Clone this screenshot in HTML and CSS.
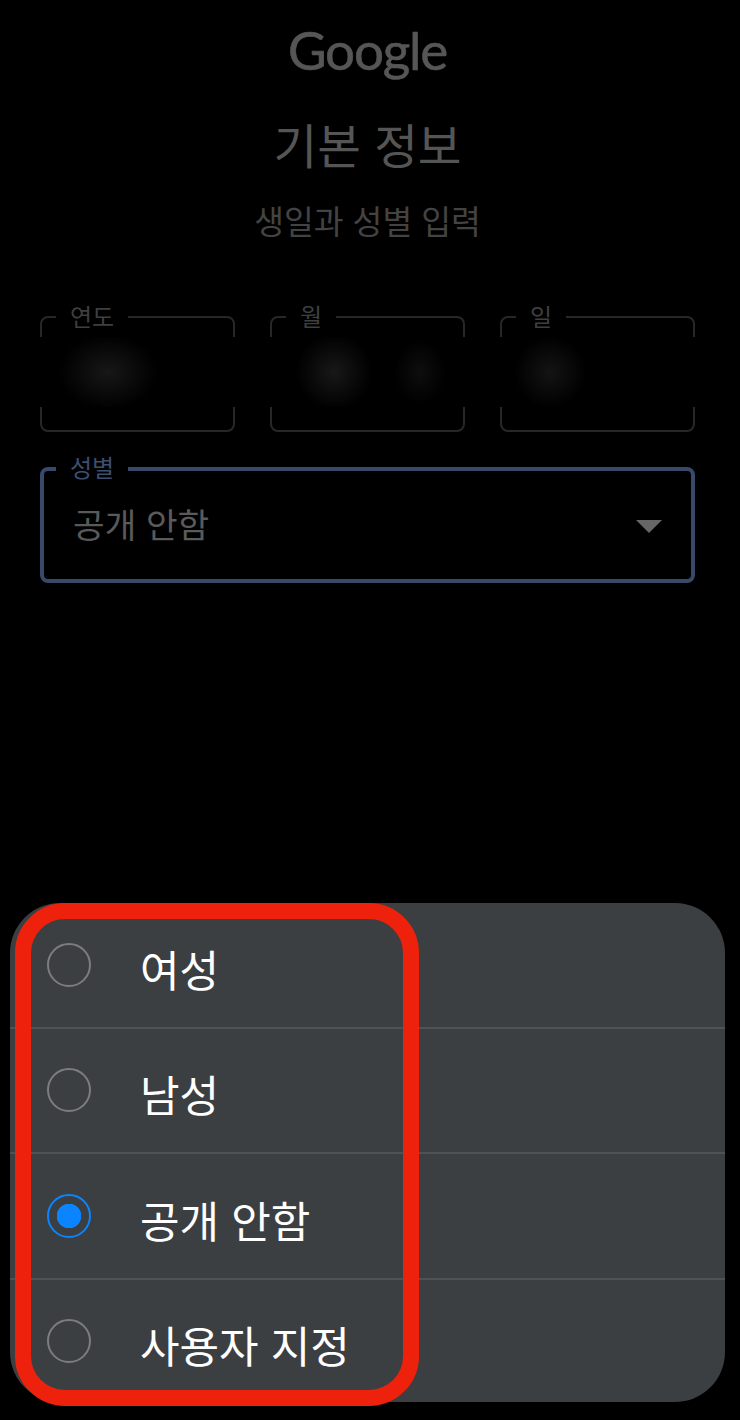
FILE: index.html
```html
<!DOCTYPE html>
<html lang="ko">
<head>
  <meta charset="UTF-8">
  <title>기본 정보</title>
  <link rel="stylesheet" href="styles.css">
</head>
<body>

<div class="screen">
  <!-- 상단 제목 -->
  <div class="logo">Google</div>
  <div class="title">기본 정보</div>
  <div class="subtitle">생일과 성별 입력</div>

  <!-- 생일 입력란 -->
  <div class="date-row">
    <div class="field">
      <span class="field-label">연도</span>
      <div class="blur-patch blur-year"></div>
    </div>
    <div class="field">
      <span class="field-label">월</span>
      <div class="blur-patch blur-month"></div>
    </div>
    <div class="field">
      <span class="field-label">일</span>
      <div class="blur-patch blur-day"></div>
    </div>
  </div>

  <!-- 성별 선택 -->
  <div class="gender-field">
    <span class="gender-label">성별</span>
    <span class="gender-value">공개 안함</span>
    <span class="gender-arrow"></span>
  </div>

  <!-- 하단 시트 -->
  <div class="sheet">
    <div class="sheet-row">
      <span class="radio"></span>
      <span class="sheet-text">여성</span>
    </div>
    <div class="sheet-row">
      <span class="radio"></span>
      <span class="sheet-text">남성</span>
    </div>
    <div class="sheet-row">
      <span class="radio selected"></span>
      <span class="sheet-text">공개 안함</span>
    </div>
    <div class="sheet-row last">
      <span class="radio"></span>
      <span class="sheet-text">사용자 지정</span>
    </div>
    <div class="highlight"></div>
  </div>
</div>

</body>
</html>
```

FILE: styles.css
```css
* {
  box-sizing: border-box;
}

html, body {
  margin: 0;
  background-color: #000;
}

.screen {
  width: 740px;
  height: 1420px;
  display: flex;
  flex-direction: column;
  font-family: "Noto Sans CJK KR", "Noto Sans", sans-serif;
  overflow: hidden;
}

/* 상단 제목 */
.logo {
  margin-top: 16px;
  height: 68px;
  padding-right: 5px;
  font-family: "Lato", sans-serif;
  font-size: 53px;
  line-height: 68px;
  letter-spacing: -1.2px;
  text-align: center;
  color: #565656;
  -webkit-text-stroke: 0.6px #565656;
}
.title {
  margin-top: 28px;
  height: 64px;
  padding-right: 5px;
  font-size: 47.5px;
  line-height: 64px;
  text-align: center;
  color: #555;
}
.subtitle {
  margin-top: 22px;
  height: 44px;
  padding-right: 5px;
  font-size: 32.4px;
  line-height: 44px;
  text-align: center;
  color: #434343;
}

/* 생일 입력란 */
.date-row {
  display: flex;
  gap: 35px;
  margin: 74px 45px 0 40px;
}
.field {
  position: relative;
  flex: 1;
  height: 116px;
  border: 2px solid #272727;
  border-radius: 8px;
}
.field-label {
  position: absolute;
  left: 14px;
  top: -19px;
  padding: 0 14px;
  background-color: #000;
  font-size: 24px;
  line-height: 34px;
  color: #3f3f3f;
}

/* 가려진 생일 값 */
.blur-patch {
  position: absolute;
  left: -8px;
  right: -8px;
  top: 19px;
  height: 70px;
}
.blur-year {
  background: radial-gradient(ellipse 50px 38px at 74px 35px, #171717, #000 100%);
}
.blur-month {
  background:
    radial-gradient(ellipse 38px 38px at 70px 35px, #181818, transparent 100%),
    radial-gradient(ellipse 26px 32px at 156px 35px, #0e0e0e, transparent 100%),
    #000;
}
.blur-day {
  background: radial-gradient(ellipse 36px 36px at 56px 35px, #141414, #000 100%);
}

/* 성별 선택 */
.gender-field {
  position: relative;
  display: flex;
  align-items: center;
  justify-content: space-between;
  height: 116px;
  margin: 35px 45px 0 40px;
  padding: 0 30px 0 29px;
  border: 4px solid #374a6b;
  border-radius: 8px;
}
.gender-label {
  position: absolute;
  left: 12px;
  top: -21px;
  padding: 0 14px;
  background-color: #000;
  font-size: 24px;
  line-height: 34px;
  color: #3d4f70;
}
.gender-value {
  font-size: 34.4px;
  line-height: 48px;
  margin-bottom: 4px;
  color: #5a5a5a;
}
.gender-arrow {
  width: 0;
  height: 0;
  border-left: 13px solid transparent;
  border-right: 13px solid transparent;
  border-top: 13px solid #666;
  margin-right: -1px;
  margin-top: 2px;
}

/* 하단 시트 */
.sheet {
  position: relative;
  display: flex;
  flex-direction: column;
  height: 499px;
  margin: auto 15px 18px 10px;
  background-color: #3c3f42;
  border-radius: 50px;
}
.sheet-row {
  display: flex;
  align-items: center;
  flex: none;
  height: 125.5px;
  padding-left: 37px;
  border-bottom: 2px solid #505356;
}
.sheet-row.last {
  flex: 1;
  border-bottom: 0;
}
.radio {
  width: 44px;
  height: 44px;
  flex-shrink: 0;
  border: 2px solid #7d7d7d;
  border-radius: 50%;
}
.radio.selected {
  border-color: #0a84ff;
  background: radial-gradient(circle, #0a84ff 12px, transparent 12.5px);
}
.sheet-text {
  margin-left: 49px;
  font-size: 43px;
  line-height: 60px;
  margin-top: 6px;
  color: #fff;
}

/* 빨간 강조 테두리 */
.highlight {
  position: absolute;
  left: 5px;
  top: 0;
  width: 404px;
  height: 503px;
  border: 16px solid #ee220c;
  border-radius: 50px;
}
```
